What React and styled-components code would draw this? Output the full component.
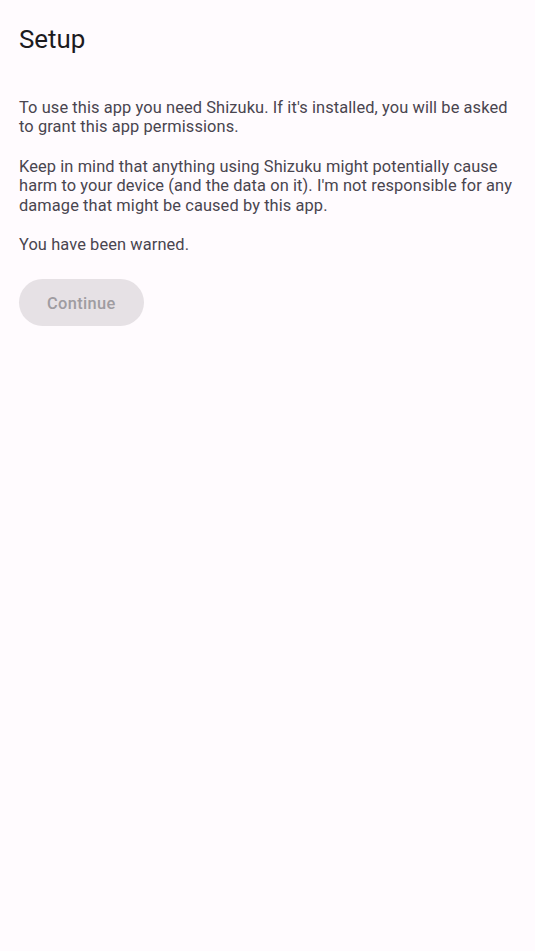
import React from 'react';
import styled, { createGlobalStyle } from 'styled-components';

const GlobalStyle = createGlobalStyle`
  html, body {
    margin: 0;
    padding: 0;
    background: #fffbfe;
  }
  body {
    font-family: Roboto, "Liberation Sans", sans-serif;
  }
`;

const Screen = styled.main`
  min-height: 951px;
  box-sizing: border-box;
  padding: 23px 19px 19px;
  display: flex;
  flex-direction: column;
  align-items: flex-start;
`;

const Title = styled.h1`
  margin: 0;
  font-size: 25.9px;
  line-height: 32.8px;
  font-weight: 400;
  color: #1c1b1f;
`;

const Body = styled.div`
  margin-top: 42px;
  display: flex;
  flex-direction: column;
  gap: 19.6px;
`;

const Paragraph = styled.p`
  margin: 0;
  font-size: 16.4px;
  line-height: 19.6px;
  letter-spacing: 0.1px;
  color: #49454f;
`;

const Button = styled.button`
  margin-top: 24px;
  height: 47px;
  padding: 2px 28px 0;
  border: none;
  border-radius: 24px;
  background: #e6e1e5;
  color: #9f9ca1;
  font-family: inherit;
  font-size: 16.4px;
  font-weight: 500;
  letter-spacing: 0.35px;
  cursor: default;
`;

export default function App() {
  return (
    <>
      <GlobalStyle />
      <Screen>
        <Title>Setup</Title>
        <Body>
          <Paragraph>
            To use this app you need Shizuku. If it's installed, you will be asked to grant this app permissions.
          </Paragraph>
          <Paragraph>
            Keep in mind that anything using Shizuku might potentially cause harm to your device (and the data on it). I'm not responsible for any damage that might be caused by this app.
          </Paragraph>
          <Paragraph>You have been warned.</Paragraph>
        </Body>
        <Button disabled>Continue</Button>
      </Screen>
    </>
  );
}
